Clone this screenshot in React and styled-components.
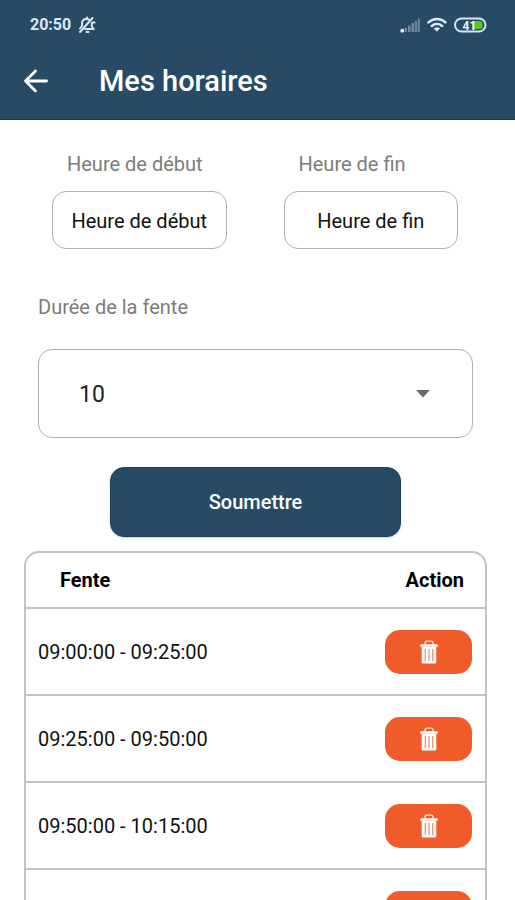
import React, { useState } from "react";
import styled, { createGlobalStyle } from "styled-components";

const NAVY = "#284b65";
const ORANGE = "#f15a29";
const LINE = "#b0b0b0";
const TABLE_LINE = "#c2c2c2";

const GlobalStyle = createGlobalStyle`
  * { box-sizing: border-box; }
  body {
    margin: 0;
    background: #fff;
    color: #111;
    font-family: Roboto, "Liberation Sans", sans-serif;
    font-size: 20px;
    line-height: 24px;
  }
  button, select { font: inherit; color: inherit; cursor: pointer; }
`;

const Screen = styled.div`
  display: flex;
  flex-direction: column;
  height: 100vh;
`;

const Header = styled.header`
  flex: none;
  background: ${NAVY};
  border-bottom: 1px solid #17364f;
  color: #fff;
`;

const StatusBar = styled.div`
  display: flex;
  align-items: center;
  justify-content: space-between;
  height: 50px;
  padding: 0 28px 0 30px;
  color: #d9e8f6;
  font-size: 16px;
  font-weight: 700;
`;

const StatusGroup = styled.div`
  display: flex;
  align-items: center;
  gap: 7px;
`;

const AppBar = styled.div`
  display: flex;
  align-items: center;
  gap: 48px;
  height: 69px;
  padding: 0 24px 8px 21px;
`;

const BackButton = styled.button`
  display: flex;
  padding: 0;
  border: 0;
  background: none;
`;

const Title = styled.h1`
  margin: 0;
  font-size: 29px;
  line-height: 36px;
  font-weight: 500;
`;

const Content = styled.main`
  flex: 1;
  min-height: 0;
  overflow-y: auto;
  scrollbar-width: none;
  padding: 32px 28px 24px 24px;
`;

const Form = styled.form`
  display: flex;
  flex-direction: column;
`;

const TimeFields = styled.div`
  display: grid;
  grid-template-columns: 1fr 1fr;
`;

const TimeField = styled.div`
  display: flex;
  flex-direction: column;
  gap: 15px;
  padding: 0 29px 0 28px;
`;

const Label = styled.label`
  padding-left: 15px;
  color: #7c7c7c;
`;

const TimeButton = styled.button`
  height: 58px;
  padding: 1px 0 0;
  border: 1px solid ${LINE};
  border-radius: 14px;
  background: #fff;
  white-space: nowrap;
`;

const DurationField = styled.div`
  display: flex;
  flex-direction: column;
  gap: 30px;
  padding: 46px 14px 0;

  ${Label} { padding-left: 0; }
`;

const SelectBox = styled.div`
  display: grid;
  align-items: center;

  > * { grid-area: 1 / 1; }
  > svg { justify-self: end; margin-right: 43px; pointer-events: none; }
`;

const Select = styled.select`
  appearance: none;
  width: 100%;
  height: 89px;
  padding: 2px 64px 0 40px;
  border: 1px solid ${LINE};
  border-radius: 14px;
  background: #fff;
  color: #222;
  font-size: 23px;
`;

const SubmitButton = styled.button`
  align-self: center;
  width: 63%;
  height: 70px;
  margin: 29px 0 14px;
  border: 1px solid #1b405b;
  border-radius: 14px;
  background: ${NAVY};
  box-shadow: 0 1px 2px rgba(40, 75, 101, 0.25);
  color: #fff;
  font-weight: 500;
`;

const SlotTable = styled.table`
  width: 100%;
  border: 2px solid ${TABLE_LINE};
  border-radius: 15px;
  border-spacing: 0;
`;

const HeadCell = styled.th`
  height: 54px;
  padding: ${(p) => (p.$end ? "0 21px 0 0" : "0 0 0 34px")};
  text-align: ${(p) => (p.$end ? "right" : "left")};
  font-weight: 700;
  color: #000;
`;

const Cell = styled.td`
  height: 87px;
  padding: 0 13px 0 12px;
  border-top: 2px solid ${TABLE_LINE};
  text-align: ${(p) => (p.$end ? "right" : "left")};
`;

const DeleteButton = styled.button`
  display: inline-flex;
  align-items: center;
  justify-content: center;
  width: 87px;
  height: 44px;
  padding: 0;
  border: 0;
  border-radius: 15px;
  background: ${ORANGE};
  vertical-align: middle;
`;

const MutedBell = () => (
  <svg width="18" height="18" viewBox="0 0 18 18" fill="none" stroke="#d9e8f6" strokeWidth="2" strokeLinecap="round" strokeLinejoin="round" aria-hidden="true">
    <path d="M2 12.500 4 10V7.500C4 4.500 6 3 8.500 3c1 0 2 .2 3 .8M13.800 7v3.500l2 2.500H7" />
    <path d="M8.500 16h2M9 1.500V3M2 16 14.500 2M14.500 6.500h2" />
  </svg>
);

const Signal = () => (
  <svg width="20" height="16" viewBox="0 0 20 16" aria-hidden="true">
    <g fill="#6b879c">
      <rect x="4.500" y="11" width="2.500" height="4" />
      <rect x="8" y="8.500" width="2.500" height="6.500" />
      <rect x="11.500" y="6" width="2.500" height="9" />
      <rect x="14.800" y="4" width="2.200" height="11" />
      <rect x="17.800" y="1.500" width="2" height="13.500" />
    </g>
    <rect x="0.500" y="12" width="3.500" height="3.500" rx="1" fill="#e6f2fc" />
  </svg>
);

const Wifi = () => (
  <svg width="20" height="16" viewBox="0 0 20 16" fill="none" stroke="#dcebf8" strokeWidth="2.500" strokeLinecap="round" aria-hidden="true">
    <path d="M1.500 5.400C6.300.8 13.700.8 18.500 5.400M4.800 9c3.100-2.800 7.300-2.800 10.400 0" />
    <path d="M7.500 11.500q2.500-1.500 5 0L10 14z" fill="#dcebf8" strokeWidth="1" strokeLinejoin="round" />
  </svg>
);

const Battery = () => (
  <svg width="33" height="16" viewBox="0 0 33 16" aria-label="Batterie 41 %" role="img">
    <rect x="1" y="1.500" width="30.500" height="13" rx="6.500" fill="none" stroke="#d3e5f4" strokeWidth="2" />
    <path d="M18 4h8a2.500 2.500 0 0 1 2.500 2.500v3A2.500 2.500 0 0 1 26 12h-8z" fill="#56c51c" />
    <text x="15.500" y="12.500" textAnchor="middle" fontFamily="Roboto, sans-serif" fontSize="12" fontWeight="700" fill="#eef6fd">41</text>
  </svg>
);

const BackArrow = () => (
  <svg width="30" height="30" viewBox="0 0 30 30" fill="none" stroke="#fff" strokeWidth="2.800" strokeLinecap="round" strokeLinejoin="round" aria-hidden="true">
    <path d="M25.500 15H4.500M14.500 5 4.500 15l10 10" />
  </svg>
);

const Caret = () => (
  <svg width="14" height="8" viewBox="0 0 14 8" aria-hidden="true">
    <path d="M0 0h14L7 7.500z" fill="#6a6a6a" />
  </svg>
);

const Trash = () => (
  <svg width="18" height="24" viewBox="0 0 18 24" aria-hidden="true">
    <path d="M5 4.500V3.200Q5 1.200 7 1.200h4q2 0 2 2v1.300" fill="none" stroke="#ffe9e0" strokeWidth="1.300" />
    <path d="M1 4.200h16q.8 0 .8.800v1.800H.2V5q0-.8.800-.8z" fill="#fff" />
    <path d="M1.700 6.800h14.600v15.400q0 1.300-1.300 1.300H3q-1.300 0-1.300-1.300z" fill="#fff" />
    <path d="M5.300 9.500v11M9 9.500v11M12.700 9.500v11" stroke="#ef9274" strokeWidth="1.300" strokeLinecap="round" />
  </svg>
);

const INITIAL_SLOTS = [
  "09:00:00 - 09:25:00",
  "09:25:00 - 09:50:00",
  "09:50:00 - 10:15:00",
  "10:15:00 - 10:40:00",
];

export default function App() {
  const [slots, setSlots] = useState(INITIAL_SLOTS);
  const [duration, setDuration] = useState("10");

  return (
    <Screen>
      <GlobalStyle />
      <Header>
        <StatusBar>
          <StatusGroup>
            <span>20:50</span>
            <MutedBell />
          </StatusGroup>
          <StatusGroup>
            <Signal />
            <Wifi />
            <Battery />
          </StatusGroup>
        </StatusBar>
        <AppBar>
          <BackButton type="button" aria-label="Retour">
            <BackArrow />
          </BackButton>
          <Title>Mes horaires</Title>
        </AppBar>
      </Header>

      <Content>
        <Form onSubmit={(e) => e.preventDefault()}>
          <TimeFields>
            <TimeField>
              <Label htmlFor="start">Heure de début</Label>
              <TimeButton id="start" type="button">Heure de début</TimeButton>
            </TimeField>
            <TimeField>
              <Label htmlFor="end">Heure de fin</Label>
              <TimeButton id="end" type="button">Heure de fin</TimeButton>
            </TimeField>
          </TimeFields>

          <DurationField>
            <Label htmlFor="duration">Durée de la fente</Label>
            <SelectBox>
              <Select id="duration" value={duration} onChange={(e) => setDuration(e.target.value)}>
                <option value="10">10</option>
              </Select>
              <Caret />
            </SelectBox>
          </DurationField>

          <SubmitButton type="submit">Soumettre</SubmitButton>
        </Form>

        <SlotTable>
          <thead>
            <tr>
              <HeadCell scope="col">Fente</HeadCell>
              <HeadCell scope="col" $end>Action</HeadCell>
            </tr>
          </thead>
          <tbody>
            {slots.map((slot) => (
              <tr key={slot}>
                <Cell>{slot}</Cell>
                <Cell $end>
                  <DeleteButton
                    type="button"
                    aria-label={`Supprimer ${slot}`}
                    onClick={() => setSlots(slots.filter((s) => s !== slot))}
                  >
                    <Trash />
                  </DeleteButton>
                </Cell>
              </tr>
            ))}
          </tbody>
        </SlotTable>
      </Content>
    </Screen>
  );
}
